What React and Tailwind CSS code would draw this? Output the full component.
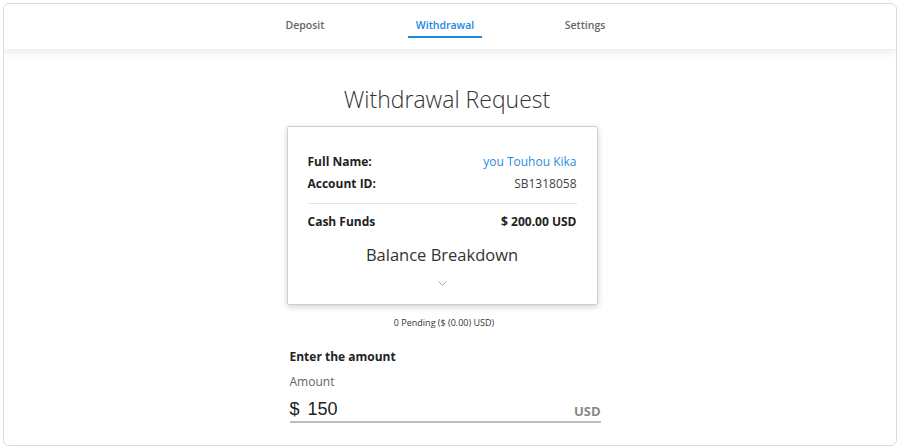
import { ChevronDown } from "lucide-react";

const font = { fontFamily: '"Open Sans", "Noto Sans", sans-serif' };

function Row({ label, value, valueClass }) {
  return (
    <div className="flex justify-between items-center h-[22px]">
      <span className="text-[12px] font-bold text-[#222]">{label}</span>
      <span className={valueClass}>{value}</span>
    </div>
  );
}

export default function App() {
  return (
    <div className="w-[900px] h-[448px] bg-white p-[3px]" style={font}>
      <div className="h-[443px] rounded-[6px] border border-[#dcdcdc] overflow-hidden flex flex-col bg-white">
        {/* tabs */}
        <div className="h-[46px] shrink-0 flex justify-center items-start shadow-[0_4px_6px_rgba(0,0,0,0.06)] relative z-10 border-b border-[#f0f0f0]">
          <div className="flex pt-[14px] ml-[-10px]">
            <div className="w-[140px] text-center text-[10.5px] font-semibold text-[#666]">Deposit</div>
            <div className="w-[140px] flex justify-center">
              <div className="w-[74px] text-center text-[10.5px] font-semibold text-[#1a88e0] border-b-2 border-[#1a88e0] pb-[2px]">
                Withdrawal
              </div>
            </div>
            <div className="w-[140px] text-center text-[10.5px] font-semibold text-[#666]">Settings</div>
          </div>
        </div>

        <div className="flex-1 flex flex-col items-center">
          <h1 className="mt-[33px] text-[23px] font-light text-[#333] leading-[32px] ml-[-6px]">
            Withdrawal Request
          </h1>

          <div className="mt-[11px] ml-[-16px] w-[311px] border border-[#cfcfcf] rounded-[2px] shadow-[0_2px_6px_rgba(0,0,0,0.18)] px-[20px] pt-[24px] pb-[13px]">
            <Row label="Full Name:" value="you Touhou Kika" valueClass="text-[12px] text-[#2a8ce2]" />
            <Row label="Account ID:" value="SB1318058" valueClass="text-[12px] text-[#444]" />
            <div className="border-t border-[#e3e3e3] mt-[8px] mb-[7px]" />
            <Row label="Cash Funds" value="$ 200.00 USD" valueClass="text-[12px] font-bold text-[#222]" />
            <div className="text-center text-[16.5px] text-[#333] mt-[10px] leading-[24px]">Balance Breakdown</div>
            <div className="flex justify-center mt-[9px]">
              <ChevronDown className="w-[15px] h-[15px] text-[#999]" strokeWidth={1.5} />
            </div>
          </div>

          <div className="mt-[11px] ml-[-12px] text-[9px] text-[#333]">0 Pending ($ (0.00) USD)</div>

          <div className="mt-[19px] w-[311px] ml-[-10px]">
            <div className="text-[12px] font-bold text-[#222] leading-[16px]">Enter the amount</div>
            <div className="mt-[9px] text-[12px] text-[#666] leading-[16px]">Amount</div>
            <div className="mt-[8px] flex items-end justify-between border-b-2 border-[#bdbdbd] pb-[1px]">
              <span className="flex gap-[8px] text-[18px] text-[#222] leading-[22px]" style={{ fontFamily: '"Liberation Sans", Arial, sans-serif' }}>
                <span>$</span>
                <span>150</span>
              </span>
              <span className="text-[13px] font-bold text-[#888] leading-[18px]">USD</span>
            </div>
          </div>
        </div>
      </div>
    </div>
  );
}
